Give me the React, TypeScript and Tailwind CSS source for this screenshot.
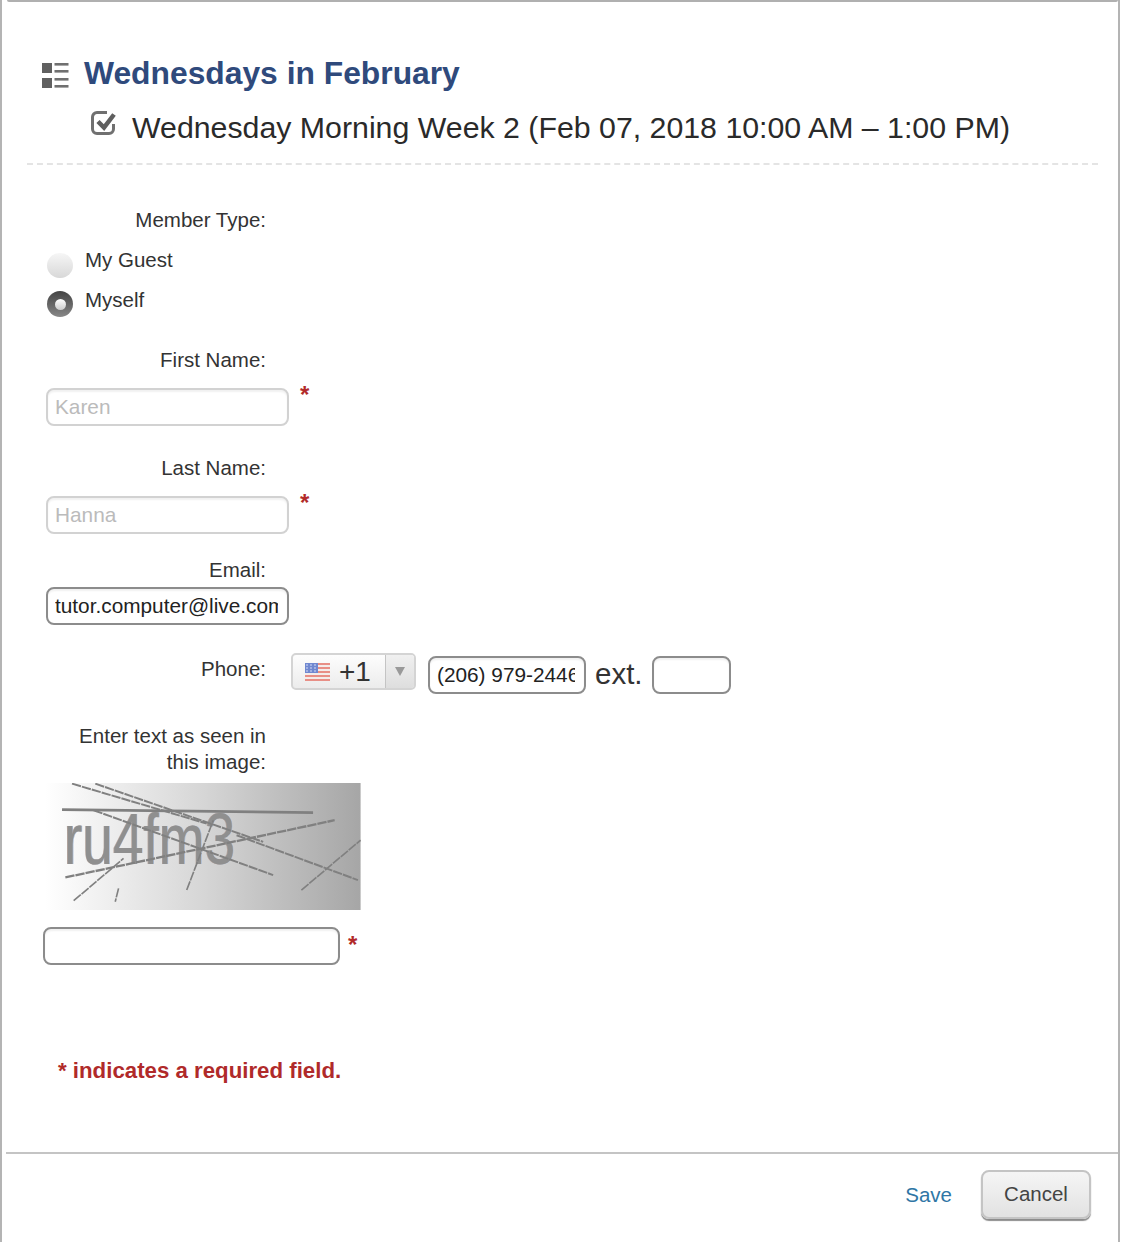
const font = { fontFamily: '"Liberation Sans", Arial, sans-serif' };

function Label({ children, className = "" }: { children: React.ReactNode; className?: string }) {
  return <div className={`w-[265px] text-right text-[20.5px] leading-[26px] text-[#333] ${className}`}>{children}</div>;
}

function Star({ className = "" }: { className?: string }) {
  return <span className={`text-[24px] leading-[24px] font-bold text-[#b22a2a] ${className}`}>*</span>;
}

function Field({ value, muted = false, className = "" }: { value?: string; muted?: boolean; className?: string }) {
  return (
    <input
      readOnly
      value={value ?? ""}
      className={`h-[38px] rounded-[8px] border-2 bg-white pl-[7px] pr-[9px] text-[20.8px] outline-none shadow-[inset_0_2px_2px_rgba(0,0,0,0.06)] ${
        muted ? "border-[#d2d2d2] text-[#bbbbbb]" : "border-[#8c8c8c] text-[#222]"
      } ${className}`}
    />
  );
}

function Flag() {
  return (
    <svg width="25" height="18" viewBox="0 0 25 18" className="shrink-0">
      <rect width="25" height="18" fill="#f4ecea" />
      {[0, 4, 8, 12, 16].map((y) => (
        <rect key={y} y={y} width="25" height="2" fill="#e88f86" />
      ))}
      <rect width="13" height="10" fill="#7088d0" />
      {[2, 6, 10].map((x) => [2, 5, 8].map((y) => <circle key={`${x}-${y}`} cx={x} cy={y} r="0.8" fill="#dfe6fb" />))}
    </svg>
  );
}

function Captcha() {
  const lines: [number, number, number, number, number][] = [
    [125, 40, 530, 160, 6],
    [195, 40, 700, 215, 6],
    [95, 118, 850, 127, 8],
    [190, 120, 730, 315, 6],
    [105, 322, 915, 150, 7],
    [130, 392, 280, 265, 5],
    [265, 355, 255, 395, 5],
    [470, 360, 550, 150, 5],
    [815, 360, 993, 210, 5],
    [620, 195, 985, 330, 6],
  ];
  return (
    <svg width="316" height="127" viewBox="45 38 948 382" className="block">
      <defs>
        <linearGradient id="cg" x1="0" x2="1" y1="0" y2="0">
          <stop offset="0" stopColor="#ffffff" />
          <stop offset="0.5" stopColor="#d6d6d6" />
          <stop offset="1" stopColor="#a6a6a6" />
        </linearGradient>
      </defs>
      <rect x="45" y="38" width="948" height="382" fill="url(#cg)" />
      <text x="103" y="283" fontSize="220" textLength="515" lengthAdjust="spacingAndGlyphs" fill="#a9bcd6" style={font}>
        ru4fm3
      </text>
      <text x="99" y="283" fontSize="220" textLength="515" lengthAdjust="spacingAndGlyphs" fill="#b5a49c" style={font}>
        ru4fm3
      </text>
      <text x="101" y="283" fontSize="220" textLength="515" lengthAdjust="spacingAndGlyphs" fill="#8f8f8f" style={font}>
        ru4fm3
      </text>
      {lines.map(([a, b, c, d, w], i) => (
        <line key={i} x1={a} y1={b} x2={c} y2={d} stroke="#808080" strokeWidth={w} strokeDasharray={w > 7 ? undefined : "28 3"} />
      ))}
    </svg>
  );
}

export default function App() {
  return (
    <div className="h-[1242px] w-[1125px] overflow-hidden bg-white" style={font}>
      <div className="flex h-full w-[1120px] flex-col border-x-2 border-[#b4b4b4]">
        <div className="ml-[5px] h-[2px] rounded-b bg-[#b0b0b0]" />

        <div className="flex-1 pl-[25px] pr-[20px]">
          <div className="ml-[15px] mt-[51px] flex items-center">
            <svg width="27" height="25" viewBox="0 0 27 25" className="mt-[5px] shrink-0">
              <rect x="0" y="0" width="10" height="10" fill="#606060" />
              <rect x="0" y="15" width="10" height="10" fill="#606060" />
              {[0, 7, 15, 22].map((y) => (
                <rect key={y} x="12.5" y={y} width="14" height="2.6" fill="#707070" />
              ))}
            </svg>
            <h1 className="ml-[15px] text-[31.8px] leading-[40px] font-bold text-[#2f4a7c]">Wednesdays in February</h1>
          </div>

          <div className="ml-[64px] mt-[15px] flex items-start">
            <svg width="25" height="24" viewBox="0 0 25 24" className="mt-[3px] shrink-0">
              <path d="M16 1.5H6A4.5 4.5 0 0 0 1.5 6V18A4.5 4.5 0 0 0 6 22.5H18A4.5 4.5 0 0 0 22.5 18V13" fill="none" stroke="#707070" strokeWidth="3" />
              <path d="M7 10.5L13 16.5L23 3.5" fill="none" stroke="#5f5f5f" strokeWidth="4.5" />
            </svg>
            <div className="ml-[16px] text-[30.3px] leading-[40px] text-[#2a2a2a]">
              Wednesday Morning Week 2 (Feb 07, 2018 10:00 AM – 1:00 PM)
            </div>
          </div>

          <div className="mt-[15px] border-t-2 border-dashed border-[#e4e4e4]" />

          <Label className="mt-[42px] ml-[-26px]">Member Type:</Label>

          <div className="mt-[14px] ml-[20px] flex items-start">
            <span className="mt-[6px] h-[25px] w-[26px] rounded-full bg-gradient-to-b from-[#f6f6f6] to-[#d8d8d8]" />
            <span className="ml-[12px] text-[20.5px] leading-[26px] text-[#333]">My Guest</span>
          </div>
          <div className="mt-[9px] ml-[20px] flex items-start">
            <span className="mt-[4px] flex h-[26px] w-[26px] items-center justify-center rounded-full bg-gradient-to-b from-[#444] to-[#888]">
              <span className="h-[11px] w-[11px] rounded-full bg-gradient-to-b from-[#fff] to-[#ccc]" />
            </span>
            <span className="ml-[12px] text-[20.5px] leading-[26px] text-[#333]">Myself</span>
          </div>

          <Label className="mt-[30px] ml-[-26px]">First Name:</Label>
          <div className="mt-[15px] ml-[19px] flex items-start">
            <Field value="Karen" muted className="w-[243px]" />
            <Star className="ml-[11px] mt-[-5px]" />
          </div>

          <Label className="mt-[29px] ml-[-26px]">Last Name:</Label>
          <div className="mt-[15px] ml-[19px] flex items-start">
            <Field value="Hanna" muted className="w-[243px]" />
            <Star className="ml-[11px] mt-[-5px]" />
          </div>

          <Label className="mt-[23px] ml-[-26px]">Email:</Label>
          <div className="mt-[4px] ml-[19px]">
            <Field value="tutor.computer@live.com" className="w-[243px]" />
          </div>

          <div className="mt-[28px] ml-[-26px] flex items-start">
            <Label className="mt-[3px]">Phone:</Label>
            <div className="ml-[25px] flex h-[37px] w-[125px] items-stretch overflow-hidden rounded-[5px] border-2 border-[#d4d4d4] bg-gradient-to-b from-[#fdfdfd] to-[#ececec]">
              <div className="flex flex-1 items-center pl-[12px]">
                <Flag />
                <span className="ml-[9px] text-[28px] leading-none text-[#333]">+1</span>
              </div>
              <div className="flex w-[29px] items-center justify-center border-l border-[#c4c4c4] bg-gradient-to-b from-[#f0f0f0] to-[#dedede]">
                <svg width="10" height="9" viewBox="0 0 10 9">
                  <path d="M0 0h10L5 9z" fill="#999" />
                </svg>
              </div>
            </div>
            <Field value="(206) 979-2446" className="ml-[12px] mt-[3px] w-[158px]" />
            <span className="ml-[9px] mt-[2px] text-[29.5px] leading-[38px] text-[#333]">ext.</span>
            <Field className="ml-[9px] mt-[3px] w-[79px]" />
          </div>

          <Label className="mt-[29px] ml-[-26px] pl-[60px]">Enter text as seen in this image:</Label>

          <div className="mt-[8px] ml-[18px]">
            <Captcha />
          </div>
          <div className="mt-[17px] ml-[16px] flex items-start">
            <Field className="w-[297px]" />
            <Star className="ml-[8px] mt-[6px]" />
          </div>

          <div className="mt-[92px] ml-[31px] text-[22.25px] leading-[28px] font-bold text-[#b02a2a]">
            * indicates a required field.
          </div>
        </div>

        <div className="ml-[4px] h-[2px] bg-[#c4c4c4]" />
        <div className="flex h-[88px] items-start justify-end pr-[27px] pt-[16px]">
          <span className="mt-[12px] text-[20.5px] leading-[26px] text-[#2f76a5]">Save</span>
          <button className="ml-[29px] h-[49px] w-[110px] rounded-[8px] border-2 border-[#c4c4c4] bg-gradient-to-b from-[#f5f5f5] to-[#e2e2e2] text-[20.5px] text-[#444] shadow-[0_2px_1px_rgba(0,0,0,0.45)]">
            Cancel
          </button>
        </div>
      </div>
    </div>
  );
}
